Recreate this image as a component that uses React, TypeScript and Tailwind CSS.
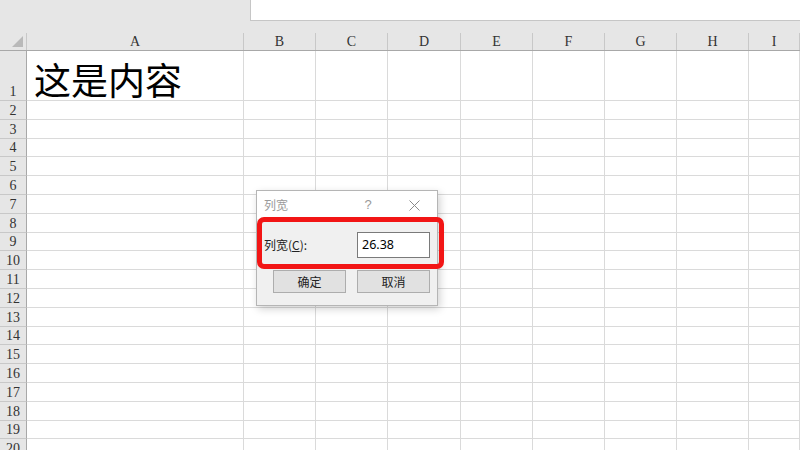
import React from "react";

const cols = ["A", "B", "C", "D", "E", "F", "G", "H", "I"];
const colWidths = ["w-[217px]", "w-[72px]", "w-[72px]", "w-[73px]", "w-[72px]", "w-[72px]", "w-[72px]", "w-[72px]", "flex-1"];
const rows = Array.from({ length: 20 }, (_, i) => i + 1);

const serif = { fontFamily: '"Liberation Serif", "Times New Roman", serif' };
const cjk = { fontFamily: '"Microsoft YaHei", "Noto Sans CJK SC", sans-serif' };

function HeaderRow() {
  return (
    <div className="flex h-[18px] shrink-0 bg-[#e6e6e6] border-b border-[#a8a8a8] text-[14px] text-[#333]" style={serif}>
      <div className="w-[27px] relative border-r border-[#c8c8c8]">
        <div className="absolute right-[3px] bottom-[3px] w-0 h-0 border-l-[11px] border-l-transparent border-b-[11px] border-b-[#b9b9b9]" />
      </div>
      {cols.map((c, i) => (
        <div key={c} className={`${colWidths[i]} shrink-0 flex items-center justify-center border-r border-[#c8c8c8] leading-none`}>
          {c}
        </div>
      ))}
    </div>
  );
}

function Row({ n }: { n: number }) {
  const tall = n === 1;
  return (
    <div className={`flex ${tall ? "h-[50px]" : "h-[18.8px]"} shrink-0`}>
      <div
        className="w-[27px] shrink-0 bg-[#e6e6e6] border-r border-[#a8a8a8] border-b border-b-[#c8c8c8] flex items-end justify-center text-[14px] leading-[17px] text-[#333]"
        style={serif}
      >
        {n}
      </div>
      {cols.map((c, i) => (
        <div key={c} className={`${colWidths[i]} shrink-0 bg-white border-r border-b border-[#dadada] flex items-end`}>
          {tall && i === 0 && (
            <span className="pl-[7px] pb-[2px] text-[37px] leading-none text-black" style={cjk}>
              这是内容
            </span>
          )}
        </div>
      ))}
    </div>
  );
}

function Dialog() {
  return (
    <div
      className="absolute left-[256px] top-[190px] w-[182px] h-[116px] bg-[#f0f0f0] border border-[#b5b5b5] shadow-[2px_3px_8px_rgba(0,0,0,0.18)] flex flex-col"
      style={cjk}
    >
      <div className="h-[28px] bg-white flex items-center text-[12px] text-[#9a9a9a]">
        <span className="pl-[7px]">列宽</span>
        <span className="ml-auto w-[20px] text-center text-[13px]" style={{ fontFamily: '"Liberation Sans", sans-serif' }}>?</span>
        <svg className="ml-[31px] mr-[17px]" width="11" height="11" viewBox="0 0 11 11">
          <path d="M0.5 0.5 L10.5 10.5 M10.5 0.5 L0.5 10.5" stroke="#8a8a8a" strokeWidth="1" />
        </svg>
      </div>
      <div className="flex items-center h-[26px] mt-[13px] pl-[7px] pr-[7px]">
        <span className="text-[12px] text-[#222]">
          列宽(<span className="underline">C</span>):
        </span>
        <div
          className="ml-auto w-[73px] h-[26px] bg-white border border-[#7a7a7a] flex items-center pl-[4px] text-[12.5px] text-black"
          style={{ fontFamily: '"Segoe UI", "Noto Sans", sans-serif' }}
        >
          26.38
        </div>
      </div>
      <div className="flex mt-[12px] pl-[16px] pr-[7px] gap-[11px]">
        <div className="w-[73px] h-[23px] bg-[#e1e1e1] border border-[#adadad] flex items-center justify-center text-[12px] text-[#222]">
          确定
        </div>
        <div className="w-[73px] h-[23px] bg-[#e1e1e1] border border-[#adadad] flex items-center justify-center text-[12px] text-[#222]">
          取消
        </div>
      </div>
    </div>
  );
}

export default function App() {
  return (
    <div className="w-[800px] h-[450px] overflow-hidden relative bg-[#e6e6e6] flex flex-col">
      <div className="flex h-[21px] shrink-0">
        <div className="w-[250px] bg-[#e6e6e6]" />
        <div className="flex-1 bg-white border-l border-b border-[#c6c6c6]" />
      </div>
      <div className="h-[12px] shrink-0 bg-[#e6e6e6]" />
      <HeaderRow />
      {rows.map((n) => (
        <Row key={n} n={n} />
      ))}
      <Dialog />
      <div className="absolute left-[257px] top-[217px] w-[187px] h-[52px] border-[5px] border-[#f21515] rounded-[7px]" />
    </div>
  );
}
